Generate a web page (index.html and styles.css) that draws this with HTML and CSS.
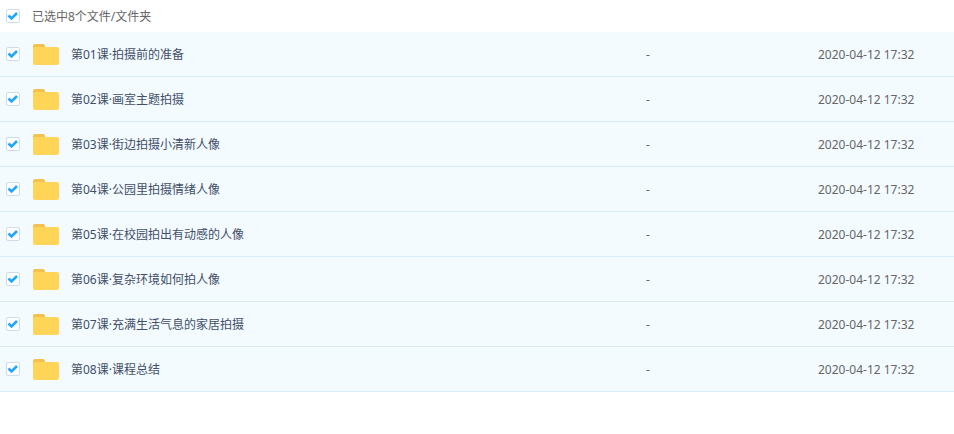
FILE: index.html
```html
<!DOCTYPE html>
<html lang="zh-CN">
<head>
    <meta charset="UTF-8">
    <title>已选中8个文件/文件夹</title>
    <link rel="stylesheet" href="styles.css">
</head>
<body>
    <div class="head">
        <span class="check"><svg viewBox="0 0 12 12"><path d="M1.5 5.5l3 3L10 3"/></svg></span>
        <span class="head-text">已选中8个文件/文件夹</span>
    </div>
    <div class="list">
        <div class="row">
            <span class="check"><svg viewBox="0 0 12 12"><path d="M1.5 5.5l3 3L10 3"/></svg></span>
            <svg class="folder" viewBox="0 0 26 21"><path class="back" d="M0 2a2 2 0 0 1 2-2h8a2 2 0 0 1 2 2v3H0z"/><rect class="front" y="3" width="26" height="18" rx="2"/></svg>
            <span class="name">第01课·拍摄前的准备</span>
            <span class="size">-</span>
            <span class="date">2020-04-12 17:32</span>
        </div>
        <div class="row">
            <span class="check"><svg viewBox="0 0 12 12"><path d="M1.5 5.5l3 3L10 3"/></svg></span>
            <svg class="folder" viewBox="0 0 26 21"><path class="back" d="M0 2a2 2 0 0 1 2-2h8a2 2 0 0 1 2 2v3H0z"/><rect class="front" y="3" width="26" height="18" rx="2"/></svg>
            <span class="name">第02课·画室主题拍摄</span>
            <span class="size">-</span>
            <span class="date">2020-04-12 17:32</span>
        </div>
        <div class="row">
            <span class="check"><svg viewBox="0 0 12 12"><path d="M1.5 5.5l3 3L10 3"/></svg></span>
            <svg class="folder" viewBox="0 0 26 21"><path class="back" d="M0 2a2 2 0 0 1 2-2h8a2 2 0 0 1 2 2v3H0z"/><rect class="front" y="3" width="26" height="18" rx="2"/></svg>
            <span class="name">第03课·街边拍摄小清新人像</span>
            <span class="size">-</span>
            <span class="date">2020-04-12 17:32</span>
        </div>
        <div class="row">
            <span class="check"><svg viewBox="0 0 12 12"><path d="M1.5 5.5l3 3L10 3"/></svg></span>
            <svg class="folder" viewBox="0 0 26 21"><path class="back" d="M0 2a2 2 0 0 1 2-2h8a2 2 0 0 1 2 2v3H0z"/><rect class="front" y="3" width="26" height="18" rx="2"/></svg>
            <span class="name">第04课·公园里拍摄情绪人像</span>
            <span class="size">-</span>
            <span class="date">2020-04-12 17:32</span>
        </div>
        <div class="row">
            <span class="check"><svg viewBox="0 0 12 12"><path d="M1.5 5.5l3 3L10 3"/></svg></span>
            <svg class="folder" viewBox="0 0 26 21"><path class="back" d="M0 2a2 2 0 0 1 2-2h8a2 2 0 0 1 2 2v3H0z"/><rect class="front" y="3" width="26" height="18" rx="2"/></svg>
            <span class="name">第05课·在校园拍出有动感的人像</span>
            <span class="size">-</span>
            <span class="date">2020-04-12 17:32</span>
        </div>
        <div class="row">
            <span class="check"><svg viewBox="0 0 12 12"><path d="M1.5 5.5l3 3L10 3"/></svg></span>
            <svg class="folder" viewBox="0 0 26 21"><path class="back" d="M0 2a2 2 0 0 1 2-2h8a2 2 0 0 1 2 2v3H0z"/><rect class="front" y="3" width="26" height="18" rx="2"/></svg>
            <span class="name">第06课·复杂环境如何拍人像</span>
            <span class="size">-</span>
            <span class="date">2020-04-12 17:32</span>
        </div>
        <div class="row">
            <span class="check"><svg viewBox="0 0 12 12"><path d="M1.5 5.5l3 3L10 3"/></svg></span>
            <svg class="folder" viewBox="0 0 26 21"><path class="back" d="M0 2a2 2 0 0 1 2-2h8a2 2 0 0 1 2 2v3H0z"/><rect class="front" y="3" width="26" height="18" rx="2"/></svg>
            <span class="name">第07课·充满生活气息的家居拍摄</span>
            <span class="size">-</span>
            <span class="date">2020-04-12 17:32</span>
        </div>
        <div class="row">
            <span class="check"><svg viewBox="0 0 12 12"><path d="M1.5 5.5l3 3L10 3"/></svg></span>
            <svg class="folder" viewBox="0 0 26 21"><path class="back" d="M0 2a2 2 0 0 1 2-2h8a2 2 0 0 1 2 2v3H0z"/><rect class="front" y="3" width="26" height="18" rx="2"/></svg>
            <span class="name">第08课·课程总结</span>
            <span class="size">-</span>
            <span class="date">2020-04-12 17:32</span>
        </div>
    </div>
</body>
</html>
```

FILE: styles.css
```css
body {
    margin: 0;
    background: #fff;
    color: #424e67;
    font-family: "Noto Sans", "Noto Sans CJK SC", sans-serif;
    font-size: 12px;
}
.head {
    display: flex;
    align-items: center;
    height: 32px;
    padding-left: 6px;
}
.head-text {
    margin-left: 12px;
    color: #666;
}
.check {
    display: block;
    flex: none;
    box-sizing: border-box;
    width: 14px;
    height: 14px;
    background: #fff;
    border: 1px solid #cfdcec;
    border-radius: 2px;
}
.check svg {
    display: block;
    width: 12px;
    height: 12px;
}
.check path {
    fill: none;
    stroke: #1ea7fd;
    stroke-width: 2.6;
}
.row {
    display: flex;
    align-items: center;
    box-sizing: border-box;
    height: 45px;
    padding-left: 6px;
    background: #f3fbff;
    border-bottom: 1px solid #daeaf8;
}
.folder {
    flex: none;
    width: 26px;
    height: 21px;
    margin-left: 13px;
    margin-top: 1px;
}
.back {
    fill: #f2c14e;
}
.front {
    fill: #ffd558;
}
.name {
    width: 575px;
    margin-left: 12px;
}
.size {
    width: 172px;
    color: #666;
}
.date {
    color: #666;
}
```
